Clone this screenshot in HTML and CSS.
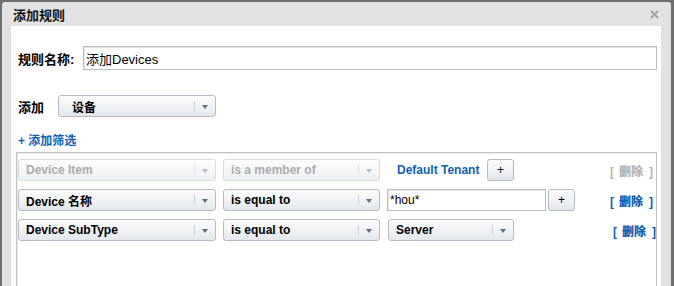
FILE: index.html
```html
<!DOCTYPE html>
<html lang="zh">
<head>
<meta charset="utf-8">
<title>添加规则</title>
<link rel="stylesheet" href="styles.css">
</head>
<body>
<div class="dialog">
  <div class="dlg-head">
    <span class="dlg-title">添加规则</span>
    <span class="dlg-close"><svg width="9" height="9" viewBox="0 0 9 9"><path d="M1 1 L8 8 M8 1 L1 8" stroke="#a4a4a4" stroke-width="2" fill="none"/></svg></span>
  </div>
  <div class="dlg-body">
    <div class="name-row">
      <label class="lbl lbl-name">规则名称:</label>
      <div class="text-input name-input">添加Devices</div>
    </div>
    <div class="add-row">
      <label class="lbl lbl-add">添加</label>
      <div class="select sel-type sel-cjk"><span class="sel-text">设备</span><span class="sel-arrow"></span></div>
    </div>
    <a class="add-filter">+ 添加筛选</a>
    <div class="filter-box">
      <div class="f-row">
        <div class="select sel-field disabled"><span class="sel-text">Device Item</span><span class="sel-arrow"></span></div>
        <div class="select sel-op disabled"><span class="sel-text">is a member of</span><span class="sel-arrow"></span></div>
        <span class="tenant">Default Tenant</span>
        <span class="btn-plus">+</span>
        <span class="del disabled-del">[<b>删除</b>]</span>
      </div>
      <div class="f-row">
        <div class="select sel-field"><span class="sel-text">Device 名称</span><span class="sel-arrow"></span></div>
        <div class="select sel-op"><span class="sel-text">is equal to</span><span class="sel-arrow"></span></div>
        <div class="text-input val-input">*hou*</div>
        <span class="btn-plus btn-plus-tight">+</span>
        <span class="del">[<b>删除</b>]</span>
      </div>
      <div class="f-row">
        <div class="select sel-field"><span class="sel-text">Device SubType</span><span class="sel-arrow"></span></div>
        <div class="select sel-op"><span class="sel-text">is equal to</span><span class="sel-arrow"></span></div>
        <div class="select sel-val"><span class="sel-text">Server</span><span class="sel-arrow"></span></div>
        <span class="del del-last">[<b>删除</b>]</span>
      </div>
    </div>
  </div>
</div>
</body>
</html>
```

FILE: styles.css
```css
html, body {
  margin: 0;
  padding: 0;
  height: 100%;
  overflow: hidden;
}
body {
  background: #6f6f6f;
  font-family: "Liberation Sans", "Noto Sans CJK SC", Arial, sans-serif;
  color: #000;
}
.dialog {
  margin: 2px 3px 0 2px;
  height: calc(100% - 2px);
  box-sizing: border-box;
  background: #e2e2e2;
  border-radius: 3px 3px 0 0;
  padding: 0 10px 0 9px;
  display: flex;
  flex-direction: column;
}
.dlg-head {
  height: 24px;
  flex: none;
  display: flex;
  align-items: center;
  justify-content: space-between;
  margin: 0 -10px 0 -9px;
  padding: 0 12px 0 11px;
}
.dlg-title {
  font-size: 13px;
  font-weight: bold;
  color: #111;
}
.dlg-close {
  display: flex;
  width: 9px;
  height: 9px;
}
.dlg-body {
  background: #fff;
  flex: 1;
  min-height: 0;
  padding: 20px 4px 0 7px;
  box-sizing: border-box;
  display: flex;
  flex-direction: column;
}
.lbl {
  font-size: 13px;
  font-weight: bold;
}
.name-row {
  display: flex;
  align-items: center;
  height: 24px;
  flex: none;
}
.lbl-name {
  width: 65px;
  flex: none;
}
.text-input {
  box-sizing: border-box;
  border: 1px solid #bdbdbd;
  box-shadow: inset 1px 1px 0 #e4e4e4;
  background: #fff;
  display: flex;
  align-items: center;
  padding-left: 2px;
  font-size: 13px;
}
.name-input {
  flex: 1;
  height: 24px;
}
.add-row {
  display: flex;
  align-items: center;
  margin-top: 25px;
  height: 22px;
  flex: none;
}
.lbl-add {
  width: 40px;
  flex: none;
}
.select {
  box-sizing: border-box;
  height: 22px;
  border: 1px solid #b6bac2;
  border-radius: 3px;
  background: linear-gradient(#fbfcfd, #f0f2f5 50%, #e3e7ec);
  display: flex;
  align-items: center;
  position: relative;
  flex: none;
  font-size: 12px;
  font-weight: bold;
}
.sel-text {
  padding-left: 7px;
  flex: 1;
  white-space: nowrap;
}
.sel-arrow {
  width: 21px;
  height: 100%;
  flex: none;
  position: relative;
}
.sel-arrow::before {
  content: "";
  position: absolute;
  left: 0;
  top: 5px;
  bottom: 5px;
  width: 1px;
  background: #cdd1d8;
}
.sel-arrow::after {
  content: "";
  position: absolute;
  left: 8px;
  top: 9px;
  border-left: 3px solid transparent;
  border-right: 3px solid transparent;
  border-top: 4px solid #5a6c88;
}
.sel-type {
  width: 158px;
}
.sel-cjk .sel-text {
  padding-left: 13px;
}
.add-filter {
  display: block;
  flex: none;
  margin-top: 16px;
  line-height: 16px;
  font-size: 12px;
  font-weight: bold;
  color: #1161b3;
}
.filter-box {
  flex: 1;
  margin: 3px 0 0 -2px;
  border: 1px solid #c2c2c2;
  border-bottom: none;
  box-shadow: inset 1px 1px 0 #ececec;
  padding: 6px 3px 0 1px;
}
.f-row {
  display: flex;
  align-items: center;
  height: 22px;
  margin-bottom: 8px;
}
.sel-field {
  width: 198px;
}
.sel-op {
  width: 157px;
  margin-left: 7px;
}
.select.disabled {
  border-color: #d9dbdf;
  color: #acacac;
  background: linear-gradient(#fdfdfe, #f5f6f8 50%, #edf0f3);
}
.select.disabled .sel-arrow::before {
  background: #e2e4e8;
}
.select.disabled .sel-arrow::after {
  border-top-color: #b2bccb;
}
.tenant {
  box-sizing: border-box;
  width: 107px;
  padding-left: 17px;
  font-size: 12px;
  font-weight: bold;
  color: #1161b3;
  white-space: nowrap;
}
.btn-plus {
  box-sizing: border-box;
  width: 27px;
  height: 22px;
  border: 1px solid #b6bac2;
  border-radius: 3px;
  background: linear-gradient(#fbfcfd, #f0f2f5 50%, #e1e5ea);
  display: flex;
  align-items: center;
  justify-content: center;
  font-size: 12px;
  flex: none;
}
.btn-plus-tight {
  margin-left: 2px;
}
.val-input {
  width: 159px;
  height: 22px;
  margin-left: 7px;
  font-size: 12px;
  flex: none;
}
.sel-val {
  width: 126px;
  margin-left: 8px;
}
.del {
  margin-left: auto;
  font-size: 12px;
  font-weight: bold;
  color: #1161b3;
  white-space: nowrap;
}
.del b {
  margin: 0 6px 0 5px;
}
.del.disabled-del {
  color: #b4b4b4;
}
.del-last {
  margin-right: -3px;
}
```
